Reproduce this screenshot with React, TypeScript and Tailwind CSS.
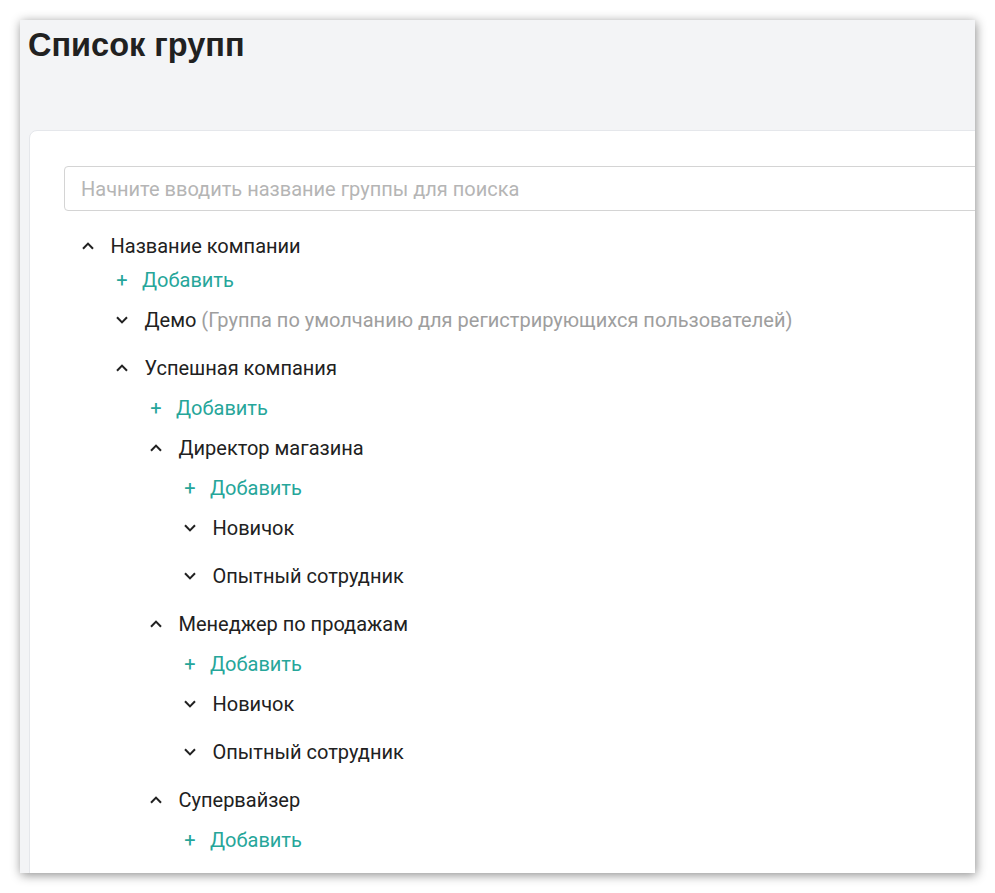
type Node = {
  name: string;
  note?: string;
  open?: boolean;
  children?: Node[];
};

const tree: Node = {
  name: "Название компании",
  open: true,
  children: [
    { name: "Демо", note: "(Группа по умолчанию для регистрирующихся пользователей)" },
    {
      name: "Успешная компания",
      open: true,
      children: [
        {
          name: "Директор магазина",
          open: true,
          children: [{ name: "Новичок" }, { name: "Опытный сотрудник" }],
        },
        {
          name: "Менеджер по продажам",
          open: true,
          children: [{ name: "Новичок" }, { name: "Опытный сотрудник" }],
        },
        { name: "Супервайзер", open: true, children: [] },
      ],
    },
  ],
};

function Chevron({ up }: { up?: boolean }) {
  return (
    <svg width="12" height="8" viewBox="0 0 12 8" fill="none" className={up ? "" : "rotate-180"}>
      <path d="M1 6.8 L6 1.6 L11 6.8" stroke="#212121" strokeWidth="2" />
    </svg>
  );
}

function AddRow() {
  return (
    <div className="flex h-[40px] items-center">
      <span className="flex w-[24px] justify-center text-[20px] text-[#26a69a]">+</span>
      <span className="ml-[8px] text-[20px] text-[#26a69a]">Добавить</span>
    </div>
  );
}

function TreeNode({ node, top }: { node: Node; top?: boolean }) {
  return (
    <div className={node.open ? "" : "mb-[8px]"}>
      <div className={`flex items-center ${top ? "h-[28px]" : "h-[40px]"}`}>
        <span className="flex w-[24px] justify-center">
          <Chevron up={node.open} />
        </span>
        <span className="ml-[10.5px] text-[20px] text-[#212121]">
          {node.name}
          {node.note && <span className="text-[#9e9e9e]"> {node.note}</span>}
        </span>
      </div>
      {node.open && (
        <div className="pl-[34px]">
          <AddRow />
          {node.children?.map((c, i) => (
            <TreeNode key={i} node={c} />
          ))}
        </div>
      )}
    </div>
  );
}

export default function App() {
  return (
    <div className="h-[893px] bg-white pl-[20px] pt-[20px] font-['Roboto',sans-serif]">
      <div className="h-[853px] w-[955px] overflow-hidden bg-[#f3f4f6] shadow-[1px_2px_10px_rgba(0,0,0,0.45)]">
        <div className="h-[110px] pl-[8px] pt-[9px]">
          <h1 className="font-['Liberation_Sans',sans-serif] text-[32.5px] font-bold leading-none text-[#212121]">
            Список групп
          </h1>
        </div>
        <div className="ml-[9px] h-[800px] w-[1000px] rounded-tl-lg border border-[#e5e7eb] bg-white pl-[34px] pt-[35px]">
          <input
            className="h-[45px] w-full rounded-[4px] border border-[#d4d4d4] px-[16px] text-[20px] text-[#212121] outline-none placeholder:text-[#b5b5b5]"
            placeholder="Начните вводить название группы для поиска"
          />
          <div className="mt-[21px] pl-[12px]">
            <TreeNode node={tree} top />
          </div>
        </div>
      </div>
    </div>
  );
}
